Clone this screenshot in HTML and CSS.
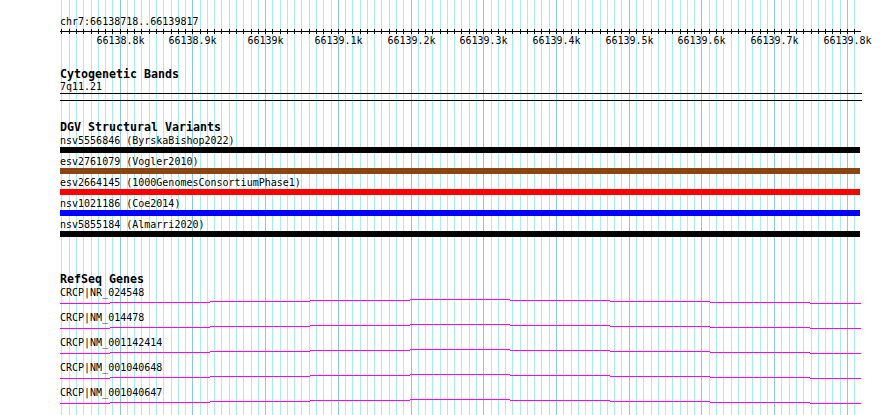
FILE: index.html
```html
<!DOCTYPE html>
<html>
<head>
    <title>chr7:66138718..66139817</title>
    <link rel="stylesheet" href="styles.css">
</head>
<body>
    <div class="panel">
        <svg id="grid" class="grid" width="890" height="415"></svg>

        <div class="ruler">
            <div class="ruler-title">chr7:66138718..66139817</div>
            <svg id="axis" class="axis" width="890" height="20"></svg>
        </div>

        <div class="track cyto">
            <div class="track-title">Cytogenetic Bands</div>
            <div class="feature-label">7q11.21</div>
            <div class="band"></div>
        </div>

        <div class="track dgv">
            <div class="track-title">DGV Structural Variants</div>
            <div class="sv-row">
                <div class="feature-label">nsv5556846 (ByrskaBishop2022)</div>
                <div class="bar bar-black"></div>
            </div>
            <div class="sv-row">
                <div class="feature-label">esv2761079 (Vogler2010)</div>
                <div class="bar bar-brown"></div>
            </div>
            <div class="sv-row">
                <div class="feature-label">esv2664145 (1000GenomesConsortiumPhase1)</div>
                <div class="bar bar-red"></div>
            </div>
            <div class="sv-row">
                <div class="feature-label">nsv1021186 (Coe2014)</div>
                <div class="bar bar-blue"></div>
            </div>
            <div class="sv-row">
                <div class="feature-label">nsv5855184 (Almarri2020)</div>
                <div class="bar bar-black"></div>
            </div>
        </div>

        <div class="track genes">
            <div class="track-title">RefSeq Genes</div>
            <div class="gene-row">
                <div class="feature-label">CRCP|NR_024548</div>
                <svg class="gene-line" width="802" height="11"></svg>
            </div>
            <div class="gene-row">
                <div class="feature-label">CRCP|NM_014478</div>
                <svg class="gene-line" width="802" height="11"></svg>
            </div>
            <div class="gene-row">
                <div class="feature-label">CRCP|NM_001142414</div>
                <svg class="gene-line" width="802" height="11"></svg>
            </div>
            <div class="gene-row">
                <div class="feature-label">CRCP|NM_001040648</div>
                <svg class="gene-line" width="802" height="11"></svg>
            </div>
            <div class="gene-row">
                <div class="feature-label">CRCP|NM_001040647</div>
                <svg class="gene-line" width="802" height="11"></svg>
            </div>
        </div>
    </div>

    <script>

const NS = "http://www.w3.org/2000/svg";
const START = 66138718;
const END = 66139817;
const SCALE = 800 / 1100;

function bpToX(bp) {
    return Math.round(60 + (bp - START) * SCALE);
}

function add(parent, tag, attrs, text) {
    const el = document.createElementNS(NS, tag);
    for (const k in attrs) el.setAttribute(k, attrs[k]);
    if (text) el.textContent = text;
    parent.appendChild(el);
    return el;
}

// background grid + ruler ticks, one line every 10bp
const grid = document.getElementById("grid");
const axis = document.getElementById("axis");
const axisTop = 28; // page y of the axis svg

for (let bp = 66138720; bp <= END; bp += 10) {
    const x = bpToX(bp) + 0.5;
    const major = bp % 100 === 0;
    add(grid, "line", { x1: x, y1: 0, x2: x, y2: 415, class: major ? "grid-major" : "grid-minor" });
    add(axis, "line", { x1: x, y1: 29 - axisTop, x2: x, y2: 34 - axisTop, class: "tick" });
    if (major) {
        const k = bp / 1000;
        add(axis, "text", { x: x, y: 44 - axisTop, class: "tick-label" }, k + "k");
    }
}

add(axis, "line", { x1: 60, y1: 31.5 - axisTop, x2: 861, y2: 31.5 - axisTop, class: "tick" });
add(axis, "polyline", { points: "64.5,27.5 60.5,31.5 64.5,35.5", class: "arrow" });
add(axis, "polyline", { points: "856.5,27.5 860.5,31.5 856.5,35.5", class: "arrow" });

// refseq transcripts: staircase segments (page y rows, relative to row top 299)
const steps = [[60, 110, 303], [110, 210, 302], [210, 310, 301], [310, 410, 300], [410, 510, 299],
               [510, 610, 300], [610, 710, 301], [710, 810, 302], [810, 861, 303]];

document.querySelectorAll(".gene-line").forEach((svg) => {
    steps.forEach(([x1, x2, y]) => {
        const ly = y - 299 + 0.5;
        add(svg, "line", { x1: x1 - 60, y1: ly, x2: x2 - 60, y2: ly, class: "transcript" });
    });
});

</script>
</body>
</html>
```

FILE: styles.css
```css
body {
    margin: 0;
    background: #fff;
    font-family: "DejaVu Sans Mono", monospace;
    color: #000;
}
.panel {
    position: relative;
    width: 890px;
    height: 415px;
    overflow: hidden;
}
.grid {
    position: absolute;
    top: 0;
    left: 0;
    z-index: 0;
}
.grid-minor {
    stroke: #a8ecf0;
    stroke-width: 1;
}
.grid-major {
    stroke: #8ac6ec;
    stroke-width: 1;
}
.ruler, .track {
    position: relative;
    z-index: 1;
}
.ruler {
    padding-top: 15px;
}
.ruler-title {
    padding-left: 60px;
    font-size: 10px;
    line-height: 13px;
}
.axis {
    display: block;
}
.tick, .arrow {
    stroke: #000;
    stroke-width: 1;
    fill: none;
}
.tick-label {
    font-family: "DejaVu Sans Mono", monospace;
    font-size: 10px;
    text-anchor: middle;
    fill: #000;
}
.track {
    padding-left: 60px;
}
.track-title {
    font-weight: bold;
    font-size: 11.63px;
    line-height: 12px;
}
.feature-label {
    font-size: 10px;
    line-height: 13px;
    white-space: nowrap;
}
.cyto {
    margin-top: 20px;
}
.band {
    width: 802px;
    height: 6px;
    border-top: 1px solid #000;
    border-bottom: 1px solid #000;
}
.dgv {
    margin-top: 20px;
}
.sv-row {
    padding: 1px 0;
}
.bar {
    width: 800px;
    height: 6px;
}
.bar-black { background: #000; }
.bar-brown { background: #8b4513; }
.bar-red { background: #ff0000; }
.bar-blue { background: #0000ff; }
.genes {
    margin-top: 35px;
}
.gene-row {
    padding-top: 1px;
}
.gene-line {
    display: block;
}
.transcript {
    stroke: #ff00ff;
    stroke-width: 1;
}
```
